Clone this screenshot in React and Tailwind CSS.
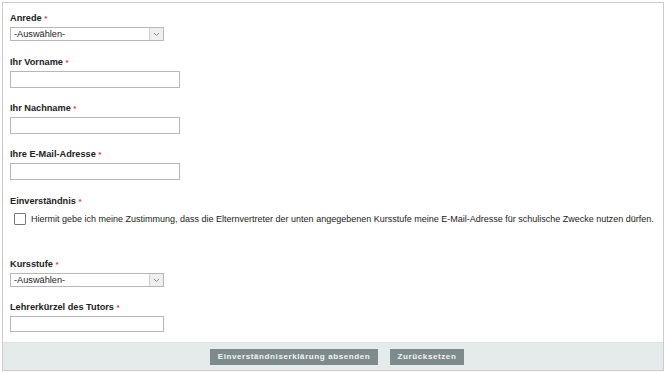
import React from 'react';

function Label({ children }) {
  return (
    <div className="h-[13px] leading-[13px] font-bold text-[#222]">
      {children} <span className="text-[#e03a3a] text-[8px] align-top">*</span>
    </div>
  );
}

function Select() {
  return (
    <div className="mt-[2px] h-[14px] w-[154px] border border-[#b7b7b7] bg-white flex items-center">
      <span className="flex-1 pl-[3px] leading-[12px] text-[#222]">-Auswählen-</span>
      <span className="h-full w-[14px] border-l border-[#d0d0d0] bg-[#efefef] flex items-center justify-center">
        <svg width="7" height="5" viewBox="0 0 7 5">
          <path d="M1 1 L3.5 3.5 L6 1" fill="none" stroke="#888" strokeWidth="1" />
        </svg>
      </span>
    </div>
  );
}

function Input({ w = 'w-[170px]', h = 'h-[17px]' }) {
  return <div className={"mt-[2px] border border-[#b7b7b7] bg-white " + w + " " + h}></div>;
}

export default function App() {
  return (
    <div className="w-[666px] h-[373px] bg-white pt-[2px] pl-[2px]" style={{ fontFamily: '"Liberation Sans", Arial, sans-serif' }}>
      <div className="w-[662px] h-[369px] border border-[#cbcbcb] flex flex-col text-[9.2px]">
        <div className="flex-1 pl-[7px] pt-[9px]">
          <Label>Anrede</Label>
          <Select />

          <div className="mt-[15px]"><Label>Ihr Vorname</Label></div>
          <Input />

          <div className="mt-[14px]"><Label>Ihr Nachname</Label></div>
          <Input />

          <div className="mt-[14px]"><Label>Ihre E-Mail-Adresse</Label></div>
          <Input />

          <div className="mt-[15px]"><Label>Einverständnis</Label></div>
          <div className="mt-[4px] flex items-center h-[14px]">
            <span className="ml-[4px] w-[12px] h-[12px] border border-[#777] rounded-[1px] bg-white"></span>
            <span className="ml-[5px] text-[#222] text-[9px] leading-[13px] whitespace-nowrap">
              Hiermit gebe ich meine Zustimmung, dass die Elternvertreter der unten angegebenen Kursstufe meine E-Mail-Adresse für schulische Zwecke nutzen dürfen.
            </span>
          </div>

          <div className="mt-[32px]"><Label>Kursstufe</Label></div>
          <Select />

          <div className="mt-[14px]"><Label>Lehrerkürzel des Tutors</Label></div>
          <Input w="w-[154px]" h="h-[16px]" />
        </div>
        <div className="h-[28px] border-t border-[#dde2e2] bg-[#e5eaea] flex items-center justify-center gap-[12px] pl-[8px]">
          <button className="h-[16px] w-[168px] bg-[#7e8b8c] text-[#f2f4f4] text-[8px] font-bold tracking-[0.6px] leading-[16px]">
            Einverständniserklärung absenden
          </button>
          <button className="h-[16px] w-[74px] bg-[#7e8b8c] text-[#f2f4f4] text-[8px] font-bold tracking-[0.6px] leading-[16px]">
            Zurücksetzen
          </button>
        </div>
      </div>
    </div>
  );
}
